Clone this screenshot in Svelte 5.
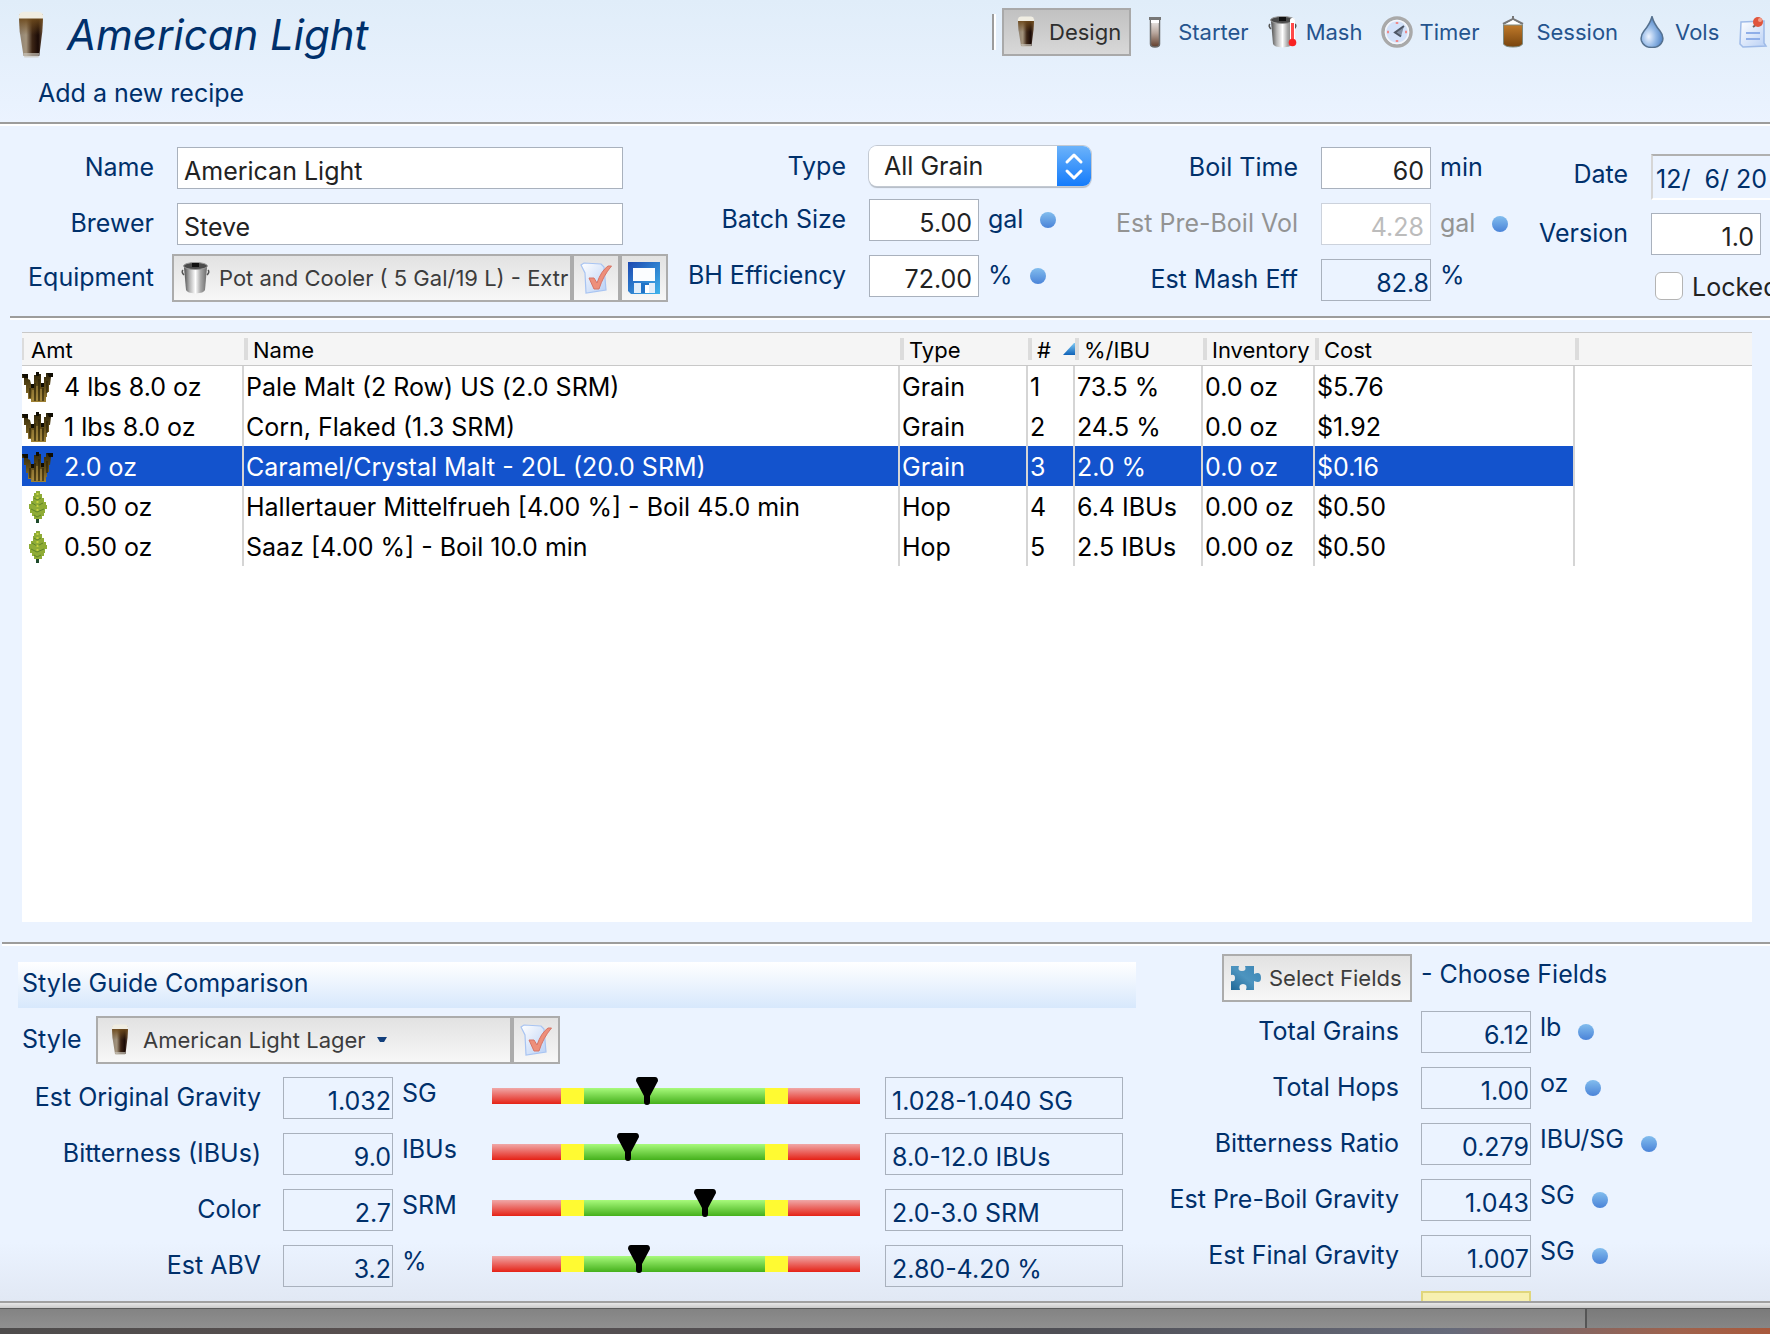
<script>
  let recipe = $state({
    name: 'American Light',
    brewer: 'Steve',
    type: 'All Grain',
    batchSize: '5.00',
    efficiency: '72.00',
    boilTime: '60',
    preBoil: '4.28',
    mashEff: '82.8',
    date: '12/  6/ 20',
    version: '1.0',
    locked: false
  });

  const tabs = [
    {icon: 'beer', label: 'Design'},
    {icon: 'tube', label: 'Starter'},
    {icon: 'mash', label: 'Mash'},
    {icon: 'clock', label: 'Timer'},
    {icon: 'keg', label: 'Session'},
    {icon: 'drop', label: 'Vols'},
    {icon: 'notes', label: ''}
  ];
  let activeTab = $state('Design');

  const columns = ['Amt', 'Name', 'Type', '#', '%/IBU', 'Inventory', 'Cost', ''];

  const ingredients = [
    {icon: 'grain', amount: '4 lbs 8.0 oz', name: 'Pale Malt (2 Row) US (2.0 SRM)', type: 'Grain', share: '73.5 %', stock: '0.0 oz', cost: '$5.76'},
    {icon: 'grain', amount: '1 lbs 8.0 oz', name: 'Corn, Flaked (1.3 SRM)', type: 'Grain', share: '24.5 %', stock: '0.0 oz', cost: '$1.92'},
    {icon: 'grain', amount: '2.0 oz', name: 'Caramel/Crystal Malt - 20L (20.0 SRM)', type: 'Grain', share: '2.0 %', stock: '0.0 oz', cost: '$0.16'},
    {icon: 'hop', amount: '0.50 oz', name: 'Hallertauer Mittelfrueh [4.00 %] - Boil 45.0 min', type: 'Hop', share: '6.4 IBUs', stock: '0.00 oz', cost: '$0.50'},
    {icon: 'hop', amount: '0.50 oz', name: 'Saaz [4.00 %] - Boil 10.0 min', type: 'Hop', share: '2.5 IBUs', stock: '0.00 oz', cost: '$0.50'}
  ];
  let selected = $state(2);

  const guide = [
    {id: 'og', label: 'Est Original Gravity', value: '1.032', unit: 'SG', marker: 42, range: '1.028-1.040 SG'},
    {id: 'ibu', label: 'Bitterness (IBUs)', value: '9.0', unit: 'IBUs', marker: 37, range: '8.0-12.0 IBUs'},
    {id: 'srm', label: 'Color', value: '2.7', unit: 'SRM', marker: 58, range: '2.0-3.0 SRM'},
    {id: 'abv', label: 'Est ABV', value: '3.2', unit: '%', marker: 40, range: '2.80-4.20 %'}
  ];

  const totals = [
    {id: 'grains', label: 'Total Grains', value: '6.12', unit: 'lb'},
    {id: 'hops', label: 'Total Hops', value: '1.00', unit: 'oz'},
    {id: 'ratio', label: 'Bitterness Ratio', value: '0.279', unit: 'IBU/SG'},
    {id: 'preboil', label: 'Est Pre-Boil Gravity', value: '1.043', unit: 'SG'},
    {id: 'fg', label: 'Est Final Gravity', value: '1.007', unit: 'SG'}
  ];
</script>

<!-- shared gradients for the icons -->
<svg class="defs" width="0" height="0" aria-hidden="true">
  <defs>
    <linearGradient id="g-beer" x1="0" x2="1" y1="0" y2="0">
      <stop offset="0" stop-color="#8d8070" />
      <stop offset=".3" stop-color="#a3937c" />
      <stop offset=".55" stop-color="#3d2616" />
      <stop offset=".8" stop-color="#1a0a06" />
      <stop offset="1" stop-color="#6d5540" />
    </linearGradient>
    <linearGradient id="g-top" x1="0" x2="0" y1="0" y2="1">
      <stop offset="0" stop-color="#6e4a1c" />
      <stop offset="1" stop-color="#6e4a1c" stop-opacity="0" />
    </linearGradient>
    <linearGradient id="g-steel" x1="0" x2="1" y1="0" y2="0">
      <stop offset="0" stop-color="#4b4b4b" />
      <stop offset=".25" stop-color="#b5b5b5" />
      <stop offset=".5" stop-color="#ffffff" />
      <stop offset=".72" stop-color="#a8a8a8" />
      <stop offset="1" stop-color="#6a6a6a" />
    </linearGradient>
    <linearGradient id="g-tube" x1="0" x2="0" y1="0" y2="1">
      <stop offset="0" stop-color="#f5f5f5" />
      <stop offset=".5" stop-color="#b8a69c" />
      <stop offset="1" stop-color="#5f3c2a" />
    </linearGradient>
    <linearGradient id="g-keg" x1="0" x2="0" y1="0" y2="1">
      <stop offset="0" stop-color="#c07a2a" />
      <stop offset="1" stop-color="#77440e" />
    </linearGradient>
    <radialGradient id="g-drop" cx=".35" cy=".65" r=".65">
      <stop offset="0" stop-color="#eef4ff" />
      <stop offset=".5" stop-color="#94b9e6" />
      <stop offset="1" stop-color="#4f82c4" />
    </radialGradient>
    <linearGradient id="g-paper" x1="0" x2="1" y1="0" y2="1">
      <stop offset="0" stop-color="#ffffff" />
      <stop offset="1" stop-color="#b9d0f5" />
    </linearGradient>
    <linearGradient id="g-disk" x1="0" x2="1" y1="0" y2="1">
      <stop offset="0" stop-color="#1c48b0" />
      <stop offset="1" stop-color="#3fb4ec" />
    </linearGradient>
    <linearGradient id="g-puzzle" x1="0" x2="1" y1="1" y2="0">
      <stop offset="0" stop-color="#1f6796" />
      <stop offset=".5" stop-color="#4d94bf" />
      <stop offset="1" stop-color="#3c86b5" />
    </linearGradient>
    <linearGradient id="g-grain" x1="0" x2="0" y1="0" y2="1">
      <stop offset="0" stop-color="#2b230a" />
      <stop offset=".5" stop-color="#5e4a17" />
      <stop offset="1" stop-color="#a08336" />
    </linearGradient>
    <linearGradient id="g-sort" x1="0" x2="0" y1="0" y2="1">
      <stop offset="0" stop-color="#7cc8f4" />
      <stop offset="1" stop-color="#0f62b8" />
    </linearGradient>
  </defs>
</svg>

{#snippet icon(name)}
  <svg class="icon" viewBox="0 0 32 32" aria-hidden="true">
    {#if name === 'beer'}
      <path d="M8 2 H24 L23.500 14 L21.500 30 H11 L8.500 14 Z" fill="url(#g-beer)" />
      <path d="M8 4 H24 L23.500 16 H8.500 Z" fill="url(#g-top)" />
      <path d="M8 5 Q7 1 11 .5 H21 Q25 1 24 5 Z" fill="#f0ede2" />
      <path d="M11 28 H21.500 L21 31 H11.500 Z" fill="#c9c4bb" opacity=".7" />
    {:else if name === 'tube'}
      <path d="M11.500 3 V28 Q11.500 31 16 31 Q20.500 31 20.500 28 V3 Z" fill="url(#g-tube)" stroke="#6b6b6b" stroke-width="1.500" />
      <rect x="10" y="1" width="12" height="3" fill="#777" />
      <rect x="12" y="4" width="8" height="3" fill="#fff" />
    {:else if name === 'pot' || name === 'mash'}
      <path d="M4 5 L6 28 Q7 31 15.500 31.500 Q24 31 25 28 L27 5 Z" fill="url(#g-steel)" />
      <ellipse cx="15.500" cy="4" rx="12" ry="3.500" fill="#4a4a4a" stroke="#9b9b9b" />
      <path d="M12 1 H19 V5 H12 Z" fill="#111" />
      <path d="M3 8 Q1 10 4 13 M28 8 Q30 10 27 13" fill="none" stroke="#555" stroke-width="1.500" />
      {#if name === 'mash'}
        <rect x="23" y="2" width="5" height="25" rx="2" fill="#fff" />
        <path d="M25.500 7 V26" stroke="#ff4a4a" stroke-width="3" />
        <circle cx="25.500" cy="26.500" r="3.800" fill="#f82323" />
      {/if}
    {:else if name === 'clock'}
      <circle cx="16" cy="16" r="14" fill="#d3e2fa" stroke="#a9a9a9" stroke-width="3.500" />
      <circle cx="16" cy="16" r="11.500" fill="none" stroke="#f4f6fa" stroke-width="1.500" />
      <path d="M16 6 V8 M16 24 V26 M6 16 H8 M24 16 H26" stroke="#ee8a8a" stroke-width="2.500" />
      <path d="M23 10 L14 16.500 L20 20.500" fill="#8591a5" stroke="#4d5665" stroke-width="2" />
    {:else if name === 'keg'}
      <path d="M16 0 V3 M16 3 L6 8 M16 3 L26 8" fill="none" stroke="#777" stroke-width="2" />
      <path d="M16 4 L25 9 H7 Z" fill="#fff" />
      <path d="M6.500 9 H25.500 V28 Q24 31 16 31 Q8 31 6.500 28 Z" fill="url(#g-keg)" stroke="#7e8a80" />
    {:else if name === 'drop'}
      <path d="M16 .5 Q18 8 24 15 Q28 20 26.500 25 Q24 31.500 16 31.500 Q8 31.500 5.500 25 Q4 20 8 15 Q14 8 16 .5 Z" fill="url(#g-drop)" stroke="#55718f" stroke-width="1.500" />
    {:else if name === 'notes'}
      <path d="M4 6 L27 5 L27 27 L29 30 L6 31 L3 28 Z" fill="url(#g-paper)" stroke="#9fbbe8" stroke-width="1.500" />
      <path d="M9 17 H23 M9 23 H23" stroke="#8faee8" stroke-width="1.800" />
      <path d="M16 11 L20 8" stroke="#666" stroke-width="2" />
      <circle cx="21" cy="6" r="5" fill="#e0553c" />
      <circle cx="23" cy="4" r="2" fill="#f5a08c" />
    {:else if name === 'check'}
      <path d="M1 3 L4 1 L21 2 L24 5 L26 28 L6 31 L5 11 Z" fill="url(#g-paper)" stroke="#a8c4f2" stroke-width="1.200" />
      <path d="M9 16 L14 16 L17 21 Q21 9 28 4 L31.500 4 Q23 14 19 27 L14 27 Z" fill="#ee8f7a" stroke="#d67466" />
    {:else if name === 'save'}
      <path d="M0 0 H32 V32 H3 L0 29 Z" fill="url(#g-disk)" />
      <rect x="5" y="6" width="22" height="13" fill="#fbfdff" />
      <rect x="6" y="21" width="21" height="10" fill="#e2eefa" />
      <rect x="13" y="21" width="8" height="10" fill="#2174c8" />
      <rect x="17" y="23" width="4" height="8" fill="#fff" />
    {:else if name === 'puzzle'}
      <path d="M1 4 H9 Q7 9 12 9 Q17 9 15 4 H24 V12 Q31 9 31 16 Q31 22 24 19 V28 H16 Q18 22 13 22 Q8 22 10 28 H1 V19 Q5 20 5 16 Q5 12 1 13 Z" fill="url(#g-puzzle)" />
    {:else if name === 'grain'}
      <path d="M0 3 H6 V8 L8 9 L9 13 H12 V4 H14 V1 H17 V3 H19 V13 H22 V6 H24 V2 H31 V6 H29 L28 14 H27 V21 H25 V26 H24 V31 H9 V28 H6 V22 H4 V14 H2 V7 H0 Z" fill="url(#g-grain)" />
      <path d="M8 17 V27 M13 12 V30 M17 8 V30 M21 17 V30 M25 10 V22" stroke="#2c2208" stroke-width="1.200" fill="none" />
      <path d="M11 19 V29 M15 15 V29 M19 18 V29" stroke="#b3954a" stroke-width="1" fill="none" />
      <path d="M0 3 H6 V7 H2 Z M25 2 H31 V6 H27 Z M9 13 H12 V17 H9 Z M19 12 H22 V16 H19 Z M14 1 H17 V5 H14 Z" fill="#0f0c02" />
    {:else if name === 'hop'}
      <path d="M14 0 H18 V3 H20 V7 H22 V11 H24 V14 H25 V18 H23 V22 H22 V25 H20 V28 H17 V31 H14 V28 H12 V25 H10 V22 H8 V18 H7 V13 H9 V10 H11 V5 H12 V2 H14 Z" fill="#8fac36" />
      <path d="M12 7 L15 9 L19 7 M10 12 L15 15 L21 12 M9 18 L15 21 L22 18 M12 24 L15 26 L19 24" stroke="#5f8429" stroke-width="1" fill="none" />
      <path d="M15.500 2 V22" stroke="#c5d13f" stroke-width="2" stroke-dasharray="2 2" />
      <path d="M14 28 H17 V32 H14 Z" fill="#1f4a2c" />
    {/if}
  </svg>
{/snippet}

<div class="app">
  <header class="header">
    <div class="heading">
      <div class="glass">{@render icon('beer')}</div>
      <h1>{recipe.name}</h1>
      <p>Add a new recipe</p>
    </div>
    <nav class="toolbar">
      {#each tabs as tab}
        <button
          class="tab"
          class:active={tab.label === activeTab}
          aria-label={tab.label || 'Notes'}
          onclick={() => (activeTab = tab.label)}>
          {@render icon(tab.icon)}
          {#if tab.label}<span>{tab.label}</span>{/if}
        </button>
      {/each}
    </nav>
  </header>

  <form class="form">
    <div class="fields general">
      <label for="name">Name</label>
      <div class="control inset"><input id="name" class="wide" bind:value={recipe.name} /></div>
      <label for="brewer">Brewer</label>
      <div class="control inset"><input id="brewer" class="wide" bind:value={recipe.brewer} /></div>
      <label for="equipment" class="tall">Equipment</label>
      <div class="control">
        <button type="button" id="equipment" class="push equipment">
          {@render icon('pot')}<span>Pot and Cooler ( 5 Gal/19 L) - Extr</span>
        </button>
        <button type="button" class="push square" aria-label="Edit equipment">{@render icon('check')}</button>
        <button type="button" class="push square" aria-label="Save equipment">{@render icon('save')}</button>
      </div>
    </div>

    <div class="fields batch">
      <label for="type">Type</label>
      <div class="control">
        <div class="select">
          <select id="type" bind:value={recipe.type}>
            <option>All Grain</option>
            <option>Partial Mash</option>
          </select>
          <svg viewBox="0 0 34 40" aria-hidden="true">
            <path d="M10 16 L17 9 L24 16 M10 25 L17 32 L24 25" fill="none" stroke="#fff" stroke-width="3" stroke-linecap="round" stroke-linejoin="round" />
          </svg>
        </div>
      </div>
      <label for="batch">Batch Size</label>
      <div class="control"><input id="batch" class="num" bind:value={recipe.batchSize} /><span class="unit">gal</span><i class="dot"></i></div>
      <label for="eff">BH Efficiency</label>
      <div class="control"><input id="eff" class="num" bind:value={recipe.efficiency} /><span class="unit">%</span><i class="dot"></i></div>
    </div>

    <div class="fields boil">
      <label for="boil">Boil Time</label>
      <div class="control"><input id="boil" class="num" bind:value={recipe.boilTime} /><span class="unit">min</span></div>
      <label for="vol" class="off">Est Pre-Boil Vol</label>
      <div class="control"><input id="vol" class="num" value={recipe.preBoil} disabled /><span class="unit off">gal</span><i class="dot"></i></div>
      <label for="mash">Est Mash Eff</label>
      <div class="control"><input id="mash" class="num" value={recipe.mashEff} readonly /><span class="unit high">%</span></div>
    </div>

    <div class="fields version">
      <label for="date">Date</label>
      <div class="control"><input id="date" class="date" bind:value={recipe.date} /></div>
      <label for="version">Version</label>
      <div class="control"><input id="version" class="num" bind:value={recipe.version} /></div>
      <div class="control lock">
        <input id="locked" type="checkbox" bind:checked={recipe.locked} />
        <label for="locked">Locked</label>
      </div>
    </div>
  </form>

  <section class="ingredients">
    <table>
      <colgroup>
        <col class="c-amt" /><col class="c-name" /><col class="c-type" /><col class="c-step" />
        <col class="c-type" /><col class="c-stock" /><col class="c-cost" /><col />
      </colgroup>
      <thead>
        <tr>
          {#each columns as column}
            <th>
              <div class="head">
                {column}
                {#if column === '#'}
                  <svg width="12" height="14" viewBox="0 0 12 14" aria-hidden="true"><path d="M12 0 L11 0 L0 12 H12 Z" fill="url(#g-sort)" /></svg>
                {/if}
              </div>
            </th>
          {/each}
        </tr>
      </thead>
      <tbody>
        {#each ingredients as item, i}
          <tr class:selected={i === selected} onclick={() => (selected = i)}>
            <td><div class="amount">{@render icon(item.icon)}<span>{item.amount}</span></div></td>
            <td>{item.name}</td>
            <td>{item.type}</td>
            <td>{i + 1}</td>
            <td>{item.share}</td>
            <td>{item.stock}</td>
            <td>{item.cost}</td>
            <td></td>
          </tr>
        {/each}
      </tbody>
    </table>
  </section>

  <section class="summary">
    <div class="guide">
      <h2>Style Guide Comparison</h2>
      <div class="style-row">
        <label for="style" class="tall">Style</label>
        <div class="control">
          <button type="button" id="style" class="push style">
            {@render icon('beer')}<span>American Light Lager</span>
            <svg class="caret" viewBox="0 0 10 6" aria-hidden="true"><path d="M0 0 H10 L7 5 H3 Z" fill="#123f7c" /></svg>
          </button>
          <button type="button" class="push square" aria-label="Edit style">{@render icon('check')}</button>
        </div>
      </div>
      {#each guide as row}
        <div class="guide-row">
          <label for={row.id}>{row.label}</label>
          <input id={row.id} class="num" value={row.value} readonly />
          <span class="unit high">{row.unit}</span>
          <div class="gauge">
            <i class="red low"></i><i class="yellow"></i><i class="green"></i><i class="yellow"></i><i class="red"></i>
            <svg class="marker" style="left: {row.marker}%" viewBox="0 0 22 28" aria-hidden="true">
              <path d="M3 0 H19 Q22 0 22 4 L14 19 V25 Q14 28 11 28 Q8 28 8 25 V19 L0 4 Q0 0 3 0 Z" />
            </svg>
          </div>
          <input class="range" value={row.range} aria-label="{row.label} range" readonly />
        </div>
      {/each}
    </div>

    <div class="totals">
      <div class="total-row">
        <button type="button" class="push choose">{@render icon('puzzle')}<span>Select Fields</span></button>
        <span class="hint">- Choose Fields</span>
      </div>
      {#each totals as row}
        <div class="total-row">
          <label for={row.id}>{row.label}</label>
          <div class="control">
            <input id={row.id} class="num" value={row.value} readonly />
            <span class="unit high">{row.unit}</span>
            <i class="dot"></i>
          </div>
        </div>
      {/each}
      <div class="total-row">
        <span></span>
        <div class="control"><input class="num warn" aria-label="Alert" readonly /></div>
      </div>
    </div>
  </section>

  <footer>
    <div class="rim"></div>
    <div class="dock"><span></span><span></span></div>
    <div class="desktop"></div>
  </footer>
</div>

<style>
  :global(body) {
    margin: 0;
    overflow: hidden;
  }

  .defs {
    position: absolute;
  }

  .app {
    display: flex;
    flex-direction: column;
    height: 100vh;
    overflow: hidden;
    background: #ebf3ff;
    color: #00306b;
    font-family: Inter, "Liberation Sans", sans-serif;
    font-size: 25px;
    line-height: 40px;
    white-space: nowrap;
  }

  .app * {
    box-sizing: border-box;
  }

  h1, h2, p {
    margin: 0;
    font-weight: 400;
  }

  button, input, select {
    margin: 0;
    font: inherit;
    color: inherit;
    outline: none;
  }

  .icon {
    flex: none;
    display: block;
    width: 32px;
    height: 32px;
  }

  .tall {
    line-height: 46px;
  }

  /* header */

  .header {
    display: grid;
    grid-template-columns: 992px 1fr;
    height: 126px;
    flex: none;
    background: linear-gradient(#e0edf9, #ebf3ff);
    border-bottom: 2px solid #fff;
    box-shadow: inset 0 -2px #9c9c9c;
  }

  .heading {
    display: grid;
    grid-template-columns: 39px 1fr;
    grid-template-rows: 70px 46px;
    column-gap: 28px;
    align-items: center;
  }

  .glass {
    display: flex;
    justify-content: flex-end;
  }

  .glass .icon {
    width: 48px;
    height: 48px;
    margin-right: -16px;
  }

  h1 {
    font-size: 42px;
    font-style: italic;
  }

  .heading p {
    grid-column: 1 / 3;
    padding-left: 38px;
  }

  .toolbar {
    display: flex;
    align-items: center;
    align-self: start;
    margin-top: 8px;
    padding-left: 10px;
    background: linear-gradient(90deg, #9c9c9c 2px, #fff 2px, #fff 4px, transparent 4px) no-repeat left center / 4px 36px;
  }

  .tab {
    display: flex;
    align-items: center;
    gap: 7px;
    height: 48px;
    padding: 0 8px 0 6px;
    border: 2px solid transparent;
    background: none;
    color: #25548e;
    font-size: 22px;
  }

  .tab.active {
    border-color: #a9a9a9;
    background: linear-gradient(#c1c1c1, #d8d8d8);
    color: #2e2e2e;
  }

  /* recipe form */

  .form {
    flex: none;
    display: flex;
    height: 194px;
    background: linear-gradient(#9c9c9c 2px, #fff 2px) no-repeat 10px 100% / 100% 4px;
  }

  .fields {
    flex: none;
    display: grid;
    column-gap: 18px;
    align-items: start;
    align-content: start;
  }

  .fields > label {
    text-align: right;
  }

  .general {
    grid-template-columns: 154px 496px;
    grid-template-rows: 56px 51px 48px;
    padding-top: 21px;
  }

  .batch {
    grid-template-columns: 178px 228px;
    grid-template-rows: 53px 56px 42px;
    column-gap: 23px;
    padding-top: 20px;
  }

  .boil {
    grid-template-columns: 201px 200px;
    grid-template-rows: 56px 56px 42px;
    column-gap: 23px;
    padding-top: 21px;
  }

  .version {
    grid-template-columns: 107px 160px;
    grid-template-rows: 59px 59px 28px;
    column-gap: 23px;
    padding-top: 28px;
  }

  .control {
    display: flex;
    align-items: flex-start;
  }

  .inset {
    padding: 0 5px;
  }

  input {
    flex: none;
    height: 42px;
    padding: 5px 6px 0;
    border: 1px solid #a9b1bd;
    border-radius: 0;
    background: #fff;
    color: #222;
  }

  input:read-only {
    padding-right: 1px;
    background: transparent;
    color: #00306b;
  }

  input:disabled {
    padding-right: 6px;
    border-color: #ccd2dc;
    background: #fff;
    color: #bcbcbc;
  }

  .wide {
    width: 446px;
  }

  .num {
    width: 110px;
    text-align: right;
  }

  .date {
    width: 140px;
    height: 46px;
    padding: 4px 3px 0;
    border: 2px solid #fff;
    border-top-color: #b0b0b0;
    border-left-color: #d6d6d6;
    background: #ebf3ff;
    color: #00306b;
  }

  .unit {
    padding-left: 9px;
  }

  .unit.high {
    line-height: 32px;
  }

  .off {
    color: #939393;
  }

  .dot {
    width: 16px;
    height: 16px;
    margin: 13px 0 0 17px;
    border-radius: 50%;
    background: linear-gradient(#82bdee, #4a83d8);
  }

  .lock {
    grid-column: 2;
    gap: 9px;
    padding-left: 4px;
    line-height: 30px;
  }

  .lock label {
    color: #222;
  }

  input[type="checkbox"] {
    width: 28px;
    height: 28px;
    appearance: none;
    border: 1px solid #b4b4b4;
    border-radius: 6px;
    background: #fff;
  }

  .select {
    position: relative;
    width: 222px;
    height: 40px;
    border-radius: 8px;
    box-shadow: 0 0 0 1px #c3c9d2, 0 2px 1px #b3bac4;
    overflow: hidden;
  }

  .select select {
    width: 100%;
    height: 40px;
    padding: 0 15px;
    appearance: none;
    border: none;
    background: #fff;
    color: #222;
  }

  .select svg {
    position: absolute;
    top: 0;
    right: 0;
    width: 34px;
    height: 40px;
    background: linear-gradient(#6cb3fa, #147bfb);
    pointer-events: none;
  }

  .push {
    flex: none;
    display: flex;
    align-items: center;
    gap: 7px;
    height: 48px;
    padding: 0 6px;
    overflow: hidden;
    border: 2px solid #acacac;
    background: linear-gradient(#e2e2e2, #f7f7f7);
    color: #3c3c3c;
    font-size: 22px;
  }

  .square {
    width: 48px;
  }

  .equipment {
    width: 400px;
  }

  .style {
    width: 416px;
  }

  .caret {
    width: 10px;
    height: 6px;
    margin-left: 4px;
  }

  /* ingredient table */

  .ingredients {
    flex: 1;
    margin: 12px 18px 20px 22px;
    background: #fff;
  }

  table {
    width: 100%;
    table-layout: fixed;
    border-spacing: 0;
    color: #000;
  }

  .c-amt { width: 222px; }
  .c-name { width: 656px; }
  .c-type { width: 128px; }
  .c-step { width: 47px; }
  .c-stock { width: 112px; }
  .c-cost { width: 260px; }

  th {
    height: 34px;
    padding: 2px 0 0;
    border-top: 1px solid #c8c8c8;
    border-bottom: 1px solid #c8c8c8;
    background: linear-gradient(#dcdcdc, #dcdcdc) no-repeat left center / 4px 22px #f5f5f5;
    font-size: 22px;
    font-weight: 400;
    line-height: 30px;
    text-align: left;
  }

  th:first-child {
    background-size: 2px 22px;
  }

  .head {
    display: flex;
    align-items: center;
    justify-content: space-between;
    padding-left: 9px;
  }

  td {
    height: 40px;
    padding: 2px 0 0 2px;
    border-right: 2px solid #d5d5d5;
    line-height: 38px;
  }

  td:first-child {
    padding-left: 0;
  }

  td:last-child {
    border: none;
  }

  .amount {
    display: flex;
    align-items: center;
    gap: 10px;
  }

  .selected td:not(:last-child) {
    background: #1353cd;
    background-clip: padding-box;
    color: #fff;
  }

  /* style guide and totals */

  .summary {
    flex: none;
    display: flex;
    height: 359px;
    overflow: hidden;
    background:
      linear-gradient(#9c9c9c 2px, #fff 2px) no-repeat 2px 0 / 100% 4px,
      linear-gradient(#ebf3ff 300px, #e1e8f4);
  }

  .guide {
    flex: none;
    display: flex;
    flex-direction: column;
    gap: 14px;
    width: 1118px;
    margin: 20px 0 0 18px;
  }

  h2 {
    height: 46px;
    padding-left: 4px;
    background: linear-gradient(#fff, #d7e8fc);
    font-size: 25px;
    line-height: 42px;
  }

  .style-row {
    display: grid;
    grid-template-columns: 60px 1fr;
    column-gap: 14px;
    height: 47px;
    margin-top: -6px;
    padding-left: 4px;
  }

  .guide-row {
    display: grid;
    grid-template-columns: 243px 22px 110px 99px 368px 25px 238px;
    align-items: start;
  }

  .guide-row label {
    text-align: right;
  }

  .guide-row .num {
    grid-column: 3;
  }

  .guide-row .gauge {
    grid-column: 5;
  }

  .guide-row .range {
    grid-column: 7;
  }

  .gauge {
    position: relative;
    display: flex;
    height: 16px;
    margin-top: 11px;
  }

  .gauge i {
    flex: 72;
  }

  .gauge .low {
    flex: 69;
  }

  .gauge .yellow {
    flex: 23;
    background: #fffa32;
  }

  .gauge .green {
    flex: 181;
    background: linear-gradient(#a8fa7c, #45b01c);
  }

  .red {
    background: linear-gradient(#f0a8a8, #e52216);
  }

  .marker {
    position: absolute;
    top: -11px;
    width: 22px;
    height: 28px;
    margin-left: -11px;
  }

  .totals {
    display: flex;
    flex-direction: column;
    gap: 14px;
    margin-top: 12px;
  }

  .total-row {
    display: grid;
    grid-template-columns: 263px 1fr;
    column-gap: 22px;
    height: 42px;
  }

  .total-row:first-child {
    height: 43px;
  }

  .total-row > label {
    text-align: right;
  }

  .choose {
    width: 190px;
    margin-left: 86px;
  }

  .warn:read-only {
    background: #f7f0b0;
    border: 2px solid #e0d67c;
  }

  /* window edge and what lies behind it */

  footer {
    flex: none;
  }

  .rim {
    height: 8px;
    border-top: 2px solid #a0a0a0;
    border-bottom: 1px solid #5c5c5c;
    background: linear-gradient(#e8e8e8, #cacaca);
  }

  .dock {
    display: flex;
    height: 19px;
  }

  .dock span {
    flex: 0 0 183px;
    background: linear-gradient(#7a7a7a, #868686);
  }

  .dock span:first-child {
    flex: 1;
    border-right: 2px solid #555;
    background: linear-gradient(#838383, #909090);
  }

  .desktop {
    height: 6px;
    background: linear-gradient(90deg, #4e4c4c, #574f4f 20%, #4f4f55 60%, #666a7a 82%, #a0624c 95%, #a8593c);
  }
</style>
